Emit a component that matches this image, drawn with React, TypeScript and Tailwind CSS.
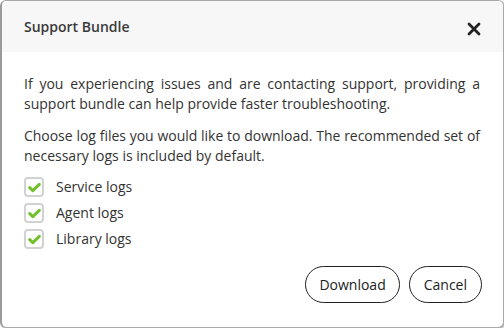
import React from "react";

function Check() {
  return (
    <span className="flex h-[20px] w-[20px] items-center justify-center rounded-[4px] border-2 border-[#d2d2d2] bg-white">
      <svg width="13" height="11" viewBox="0 0 13 11">
        <path d="M1.7 5.6 L4.8 8.6 L11.3 2.3" fill="none" stroke="#72c02c" strokeWidth="3" strokeLinecap="round" strokeLinejoin="round" />
      </svg>
    </span>
  );
}

function JLine({ children, tight }: { children: React.ReactNode; tight?: boolean }) {
  return (
    <div className={"whitespace-nowrap text-justify [text-align-last:justify] " + (tight ? "tracking-[-0.04px]" : "")}>
      {children}
    </div>
  );
}

export default function App() {
  const items = ["Service logs", "Agent logs", "Library logs"];
  return (
    <div className="h-[328px] w-[504px] bg-white" style={{ fontFamily: '"Open Sans", sans-serif' }}>
      <div className="flex h-full w-full flex-col overflow-hidden rounded-[6px] border border-[#a8a8a8] border-l-[#9a9a9a] border-l-2 shadow-[1px_1px_2px_rgba(0,0,0,0.35)] bg-white text-[#333]">
        <div className="flex h-[51px] items-center justify-between bg-[#f7f7f7] pl-[22px] pr-[22px]">
          <span className="text-[14px] font-semibold text-[#3a3a3a]">Support Bundle</span>
          <svg width="14" height="14" viewBox="0 0 14 14" className="mt-[4px]">
            <path d="M2 2 L12 12 M12 2 L2 12" stroke="#222" strokeWidth="2.8" strokeLinecap="round" />
          </svg>
        </div>
        <div className="flex flex-1 flex-col pl-[22px] pr-[23px] pt-[22px] text-[14px] leading-[20px]">
          <div>
            <JLine>If you experiencing issues and are contacting support, providing a</JLine>
            <div>support bundle can help provide faster troubleshooting.</div>
          </div>
          <div className="mt-[12px]">
            <JLine tight>Choose log files you would like to download. The recommended set of</JLine>
            <div>necessary logs is included by default.</div>
          </div>
          <div className="mt-[8px] flex flex-col">
            {items.map((t) => (
              <div key={t} className="flex h-[26px] items-center gap-[12px]">
                <Check />
                <span>{t}</span>
              </div>
            ))}
          </div>
          <div className="mt-[14px] -mr-[2px] flex justify-end gap-[9px]">
            <button className="h-[37px] rounded-full border border-[#222] px-[13px] text-[14px] text-[#222]">Download</button>
            <button className="h-[37px] rounded-full border border-[#222] px-[14px] text-[14px] text-[#222]">Cancel</button>
          </div>
        </div>
      </div>
    </div>
  );
}
